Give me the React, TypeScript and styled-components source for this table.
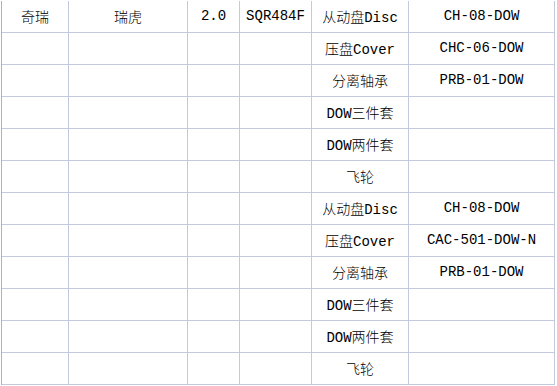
import React from "react";
import styled, { createGlobalStyle } from "styled-components";

const GlobalStyle = createGlobalStyle`
  html, body {
    margin: 0;
    padding: 0;
    background: #ffffff;
  }
  body {
    width: 557px;
    height: 386px;
    overflow: hidden;
  }
`;

const Sheet = styled.div`
  padding: 1px 0 0 1px;
`;

const Grid = styled.div`
  display: grid;
  grid-template-columns: 67px 119px 52px 72px 97px 146px;
  grid-auto-rows: 32px;
  width: max-content;
  border-left: 1px solid #a9b1c8;
`;

const Cell = styled.div`
  box-sizing: border-box;
  border-right: 1px solid #c3cadd;
  border-bottom: 1px solid #c3cadd;
  display: flex;
  align-items: center;
  justify-content: center;
  padding-bottom: 1px;
  font-family: "Liberation Mono", "Noto Sans CJK SC", monospace;
  font-size: 14px;
  font-weight: 300;
  color: #000000;
  white-space: nowrap;
  overflow: hidden;
`;

type Row = [string, string, string, string, string, string];

const parts = (codes: string[]): Row[] => [
  ["", "", "", "", "从动盘Disc", codes[0]],
  ["", "", "", "", "压盘Cover", codes[1]],
  ["", "", "", "", "分离轴承", codes[2]],
  ["", "", "", "", "DOW三件套", ""],
  ["", "", "", "", "DOW两件套", ""],
  ["", "", "", "", "飞轮", ""],
];

const rows: Row[] = [
  ...parts(["CH-08-DOW", "CHC-06-DOW", "PRB-01-DOW"]),
  ...parts(["CH-08-DOW", "CAC-501-DOW-N", "PRB-01-DOW"]),
];
rows[0] = ["奇瑞", "瑞虎", "2.0", "SQR484F", rows[0][4], rows[0][5]];

const App = () => (
  <>
    <GlobalStyle />
    <Sheet>
      <Grid>
        {rows.map((row, r) =>
          row.map((text, c) => <Cell key={`${r}-${c}`}>{text}</Cell>)
        )}
      </Grid>
    </Sheet>
  </>
);

export default App;
